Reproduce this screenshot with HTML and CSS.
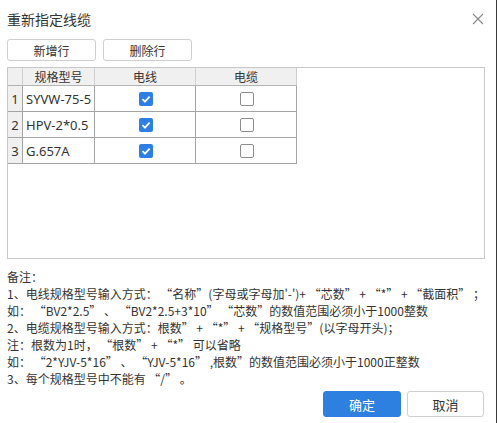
FILE: index.html
```html
<!DOCTYPE html>
<html lang="zh-CN">
<head>
<meta charset="utf-8">
<title>重新指定线缆</title>
<link rel="stylesheet" href="styles.css">
</head>
<body>
<div class="dialog">
  <div class="header">
    <span class="title">重新指定线缆</span>
    <svg class="close" width="12" height="12" viewBox="0 0 12 12"><path d="M1 1L11 11M11 1L1 11" stroke="#888" stroke-width="1.1" fill="none"/></svg>
  </div>
  <div class="toolbar">
    <button class="btn">新增行</button>
    <button class="btn">删除行</button>
  </div>
  <div class="grid-box">
    <div class="grid">
      <div class="cell hd num"></div>
      <div class="cell hd">规格型号</div>
      <div class="cell hd">电线</div>
      <div class="cell hd">电缆</div>

      <div class="cell num">1</div>
      <div class="cell name">SYVW-75-5</div>
      <div class="cell center"><span class="cb checked"><svg width="14" height="14" viewBox="0 0 14 14"><path d="M3.5 7.2L6 9.6L10.6 4.6" stroke="#fff" stroke-width="1.8" fill="none"/></svg></span></div>
      <div class="cell center"><span class="cb"></span></div>

      <div class="cell num">2</div>
      <div class="cell name">HPV-2*0.5</div>
      <div class="cell center"><span class="cb checked"><svg width="14" height="14" viewBox="0 0 14 14"><path d="M3.5 7.2L6 9.6L10.6 4.6" stroke="#fff" stroke-width="1.8" fill="none"/></svg></span></div>
      <div class="cell center"><span class="cb"></span></div>

      <div class="cell num">3</div>
      <div class="cell name">G.657A</div>
      <div class="cell center"><span class="cb checked"><svg width="14" height="14" viewBox="0 0 14 14"><path d="M3.5 7.2L6 9.6L10.6 4.6" stroke="#fff" stroke-width="1.8" fill="none"/></svg></span></div>
      <div class="cell center"><span class="cb"></span></div>
    </div>
  </div>
  <div class="notes">
    <p>备注：</p>
    <p>1、电线规格型号输入方式： “名称”(字母或字母加'-')+ “芯数” + “*” + “截面积” ；</p>
    <p>如： “BV2*2.5” 、 “BV2*2.5+3*10” “芯数”的数值范围必须小于1000整数</p>
    <p>2、电缆规格型号输入方式：根数” + “*” + “规格型号”(以字母开头)；</p>
    <p>注：根数为1时， “根数” + “*” 可以省略</p>
    <p>如： “2*YJV-5*16” 、 “YJV-5*16” ,根数”的数值范围必须小于1000正整数</p>
    <p>3、每个规格型号中不能有 “/” 。</p>
  </div>
  <div class="footer">
    <button class="btn primary">确定</button>
    <button class="btn cancel">取消</button>
  </div>
</div>
</body>
</html>
```

FILE: styles.css
```css
html, body {
  margin: 0;
  padding: 0;
  background: #fff;
}
body {
  font-family: "Noto Sans", "Noto Sans CJK SC", sans-serif;
  color: #333;
  font-size: 12px;
}
.dialog {
  height: 423px;
  box-sizing: border-box;
  padding: 10px 11px 0 7px;
  border-right: 1px solid #3a3a3a;
  width: 497px;
}
.header {
  display: flex;
  justify-content: space-between;
  align-items: center;
  height: 18px;
}
.title {
  font-size: 14px;
  line-height: 18px;
  font-family: "Noto Sans CJK SC", sans-serif;
}
.close {
  margin-right: 1px;
}
.toolbar {
  display: flex;
  gap: 7px;
  margin-top: 11px;
}
.btn {
  font-family: "Noto Sans CJK SC", sans-serif;
  font-size: 12px;
  color: #333;
  background: #fff;
  border: 1px solid #cfcfcf;
  border-radius: 3px;
  padding: 0;
  margin: 0;
}
.toolbar .btn {
  width: 89px;
  height: 22px;
}
.grid-box {
  margin-top: 6px;
  height: 192px;
  box-sizing: border-box;
  border: 1px solid #c8c8c8;
}
.grid {
  display: grid;
  grid-template-columns: 15px 72px 101px 101px;
  grid-template-rows: 18px 26px 26px 26px;
}
.cell {
  box-sizing: border-box;
  border-right: 1px solid #a4a4a4;
  border-bottom: 1px solid #a4a4a4;
  display: flex;
  align-items: center;
  font-size: 12px;
  line-height: 16px;
}
.hd {
  background: #f0f0f0;
  justify-content: center;
  border-right-color: #cfcfcf;
  border-bottom-color: #b4b4b4;
  font-family: "Noto Sans CJK SC", sans-serif;
}
.num {
  background: #f0f0f0;
  justify-content: center;
  font-size: 13px;
}
.name {
  padding-left: 3px;
  font-size: 13px;
}
.center {
  justify-content: center;
}
.cb {
  display: block;
  width: 14px;
  height: 14px;
  box-sizing: border-box;
  border: 1px solid #8d8d8d;
  border-radius: 2px;
  background: #fff;
  margin-left: 1px;
}
.cb.checked {
  border: none;
  background: #2d7fe3;
}
.cb svg {
  display: block;
}
.notes {
  margin-top: 9px;
  font-family: "Noto Sans CJK SC", sans-serif;
}
.notes p {
  margin: 0;
  line-height: 17px;
  font-size: 12px;
  white-space: nowrap;
}
.footer {
  display: flex;
  justify-content: flex-end;
  gap: 6px;
  margin-top: 4px;
  padding-right: 1px;
}
.footer .btn {
  height: 26px;
  font-size: 13px;
}
.primary {
  width: 78px;
  background: #2d7fe0;
  border-color: #2d7fe0;
  color: #fff;
}
.cancel {
  width: 77px;
}
```
